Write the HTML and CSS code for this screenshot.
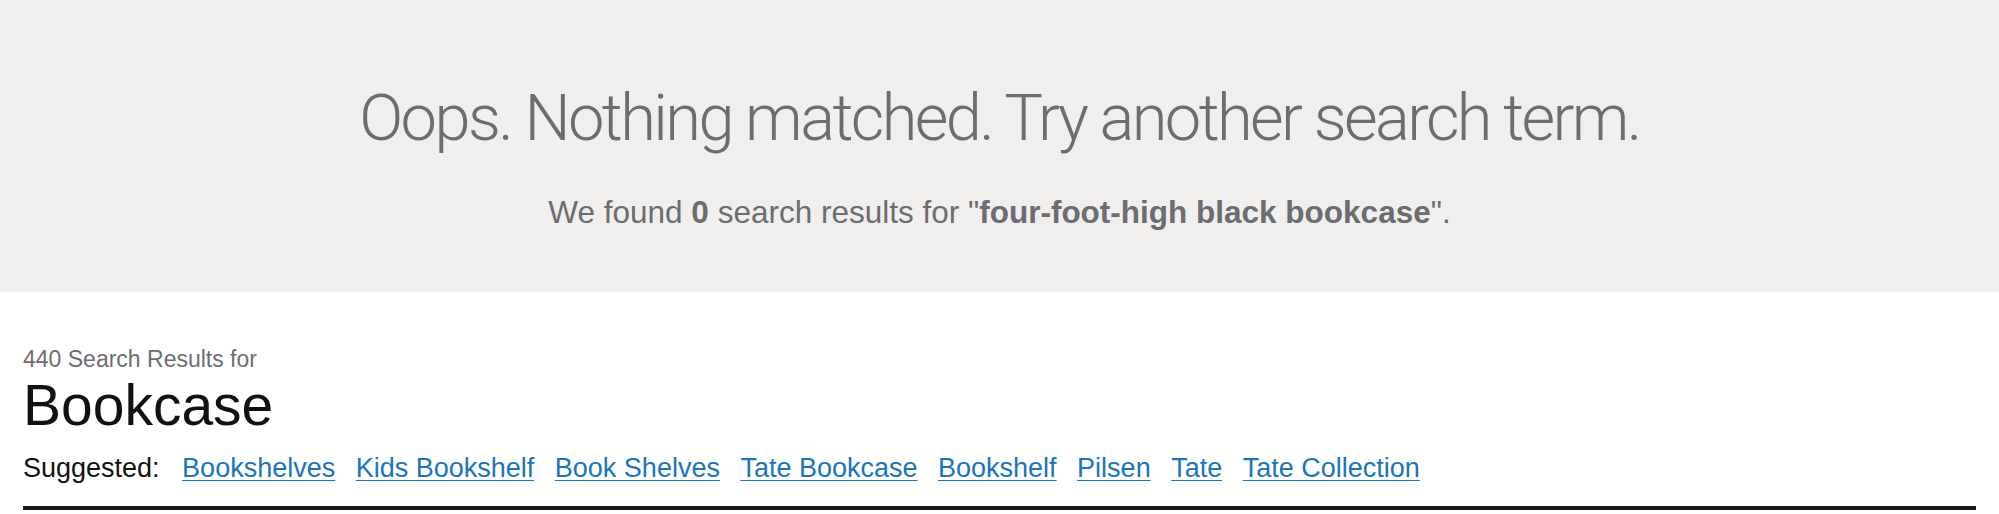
FILE: index.html
```html
<!DOCTYPE html>
<html lang="en">
<head>
<meta charset="utf-8">
<title>Search results</title>
<link rel="stylesheet" href="styles.css">
</head>
<body>
<section class="banner">
  <h1 class="banner-title">Oops. Nothing matched. Try another search term.</h1>
  <p class="banner-text">We found <strong>0</strong> search results for "<strong>four-foot-high black bookcase</strong>".</p>
</section>
<section class="results">
  <p class="results-count">440 Search Results for</p>
  <h2 class="results-term">Bookcase</h2>
  <nav class="suggested">
    <span class="suggested-label">Suggested:</span>
    <a href="#" class="suggested-link">Bookshelves</a>
    <a href="#" class="suggested-link">Kids Bookshelf</a>
    <a href="#" class="suggested-link">Book Shelves</a>
    <a href="#" class="suggested-link">Tate Bookcase</a>
    <a href="#" class="suggested-link">Bookshelf</a>
    <a href="#" class="suggested-link">Pilsen</a>
    <a href="#" class="suggested-link">Tate</a>
    <a href="#" class="suggested-link">Tate Collection</a>
  </nav>
  <hr class="results-rule">
</section>
</body>
</html>
```
FILE: styles.css
```css
html, body {
  margin: 0;
  padding: 0;
  background: #ffffff;
}

body {
  font-family: "Liberation Sans", Arial, Helvetica, sans-serif;
  color: #111111;
}

.banner {
  background: #f0efee;
  text-align: center;
  padding: 80px 0 62px;
}

.banner-title {
  margin: 0;
  font-family: Roboto, "Liberation Sans", sans-serif;
  font-weight: 300;
  font-size: 65px;
  line-height: 76px;
  letter-spacing: -2.6px;
  color: #6c6d70;
}

.banner-text {
  margin: 38px 0 0;
  font-size: 31.5px;
  line-height: 36px;
  color: #6c6d70;
}

.banner-text strong {
  font-weight: 700;
}

.results {
  padding: 54px 23px 0;
}

.results-count {
  margin: 0;
  font-size: 23px;
  line-height: 26px;
  color: #6d6e71;
}

.results-term {
  margin: 1px 0 0;
  font-weight: 400;
  font-size: 57px;
  line-height: 64px;
  color: #111111;
}

.suggested {
  margin-top: 15px;
  display: flex;
  align-items: baseline;
  gap: 20.5px;
  font-size: 27px;
  line-height: 32px;
}

.suggested-label {
  color: #111111;
  margin-right: 2px;
}

.suggested-link {
  color: #1a75bb;
  text-decoration: underline;
  text-decoration-thickness: 1px;
  text-underline-offset: 3px;
}

.results-rule {
  margin: 22px 0 0;
  border: 0;
  height: 4px;
  background: #1a1a1a;
}
```
